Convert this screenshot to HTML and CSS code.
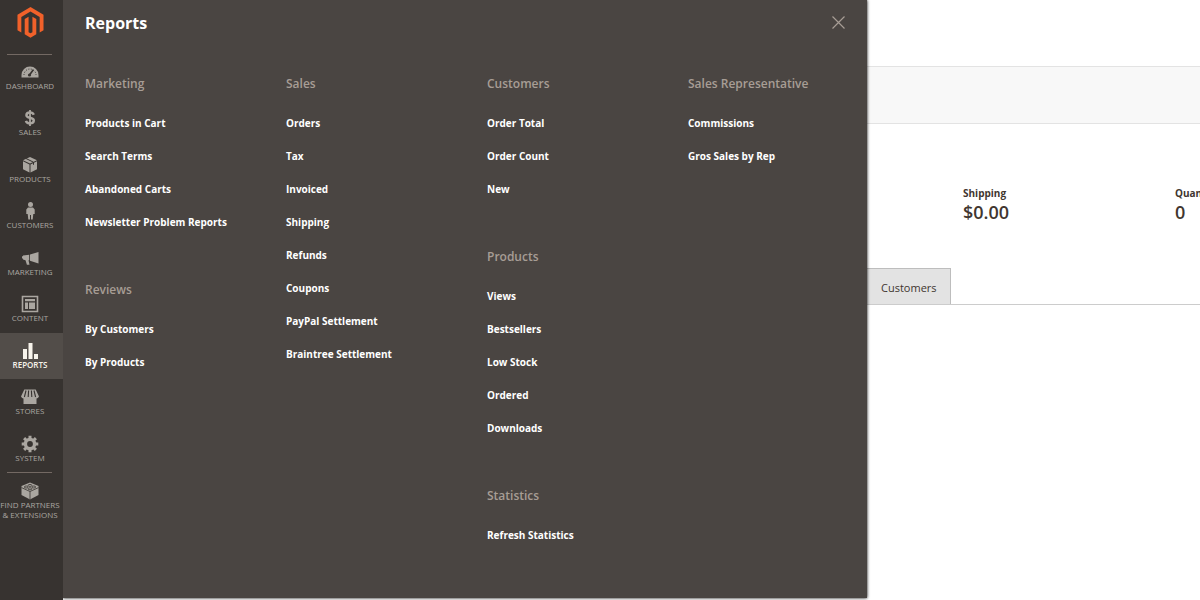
FILE: index.html
```html
<!DOCTYPE html>
<html lang="en">
<head>
<meta charset="utf-8">
<title>Reports</title>
<link rel="stylesheet" href="styles.css">
</head>
<body>
<div class="page">
  <nav class="sidebar" aria-label="Main">
    <a class="logo" href="#" aria-label="Home">
      <svg width="27" height="31" viewBox="0 0 28 32"><path fill="#f1612a" d="M14 0L27.500 8V24L23.500 26.300V10.400L14 4.700L4.500 10.400V26.300L.5 24V8zM8 12.400L12 10V26L14 27.200L16 26V10L20 12.400V28.200L14 31.700L8 28.200z"/></svg>
    </a>
    <ul class="nav-list">
      <li class="nav-item"><a href="#"><svg class="icon" viewBox="0 0 18 18"><path fill="currentColor" d="M.5 14.500V12a8.500 8.500 0 0 1 17 0v2.500z"/><g fill="none" stroke="#373330"><path stroke-width="1" stroke-dasharray="1 1.500" d="M3 12a6 6 0 0 1 12 0"/><path stroke-width="1.600" d="M12.300 6.800L8.500 12"/></g><circle cx="8.500" cy="12" r="1.600" fill="#373330"/></svg><span>Dashboard</span></a></li>
      <li class="nav-item"><a href="#"><svg class="icon" viewBox="0 0 18 18"><g fill="none" stroke="currentColor"><path stroke-width="2.400" d="M12.800 5.700C12.200 4.300 10.700 3.500 9 3.500C7 3.500 5.400 4.500 5.400 6.200C5.400 9.800 12.800 7.700 12.800 11.500C12.800 13.200 11.200 14.300 9 14.300C7 14.300 5.400 13.400 4.900 11.800"/><path stroke-width="1.800" d="M9 1V17"/></g></svg><span>Sales</span></a></li>
      <li class="nav-item"><a href="#"><svg class="icon" viewBox="0 0 18 18"><path fill="currentColor" d="M9 1L16 4.200L9 7.500L2 4.200zM2 5.300L8.500 8.500V16.500L2 13.200zM16 5.300V13.200L9.500 16.500V8.500z"/><path fill="none" stroke="#373330" d="M5 2.500L12.500 6.200V8.800"/></svg><span>Products</span></a></li>
      <li class="nav-item"><a href="#"><svg class="icon" viewBox="0 0 18 18"><circle cx="9.500" cy="2.500" r="2.500" fill="currentColor"/><path fill="currentColor" d="M7 5.500h5l1.700 2v4.500h-1.400l-.6 5.500H10V13H9v4.500H7.300L6.700 12H5.300V7.500z"/></svg><span>Customers</span></a></li>
      <li class="nav-item"><a href="#"><svg class="icon" viewBox="0 0 18 18"><path fill="currentColor" d="M17.500 3V14.500L9 11.700V5.500zM8.200 5.700V11.300H7.500l1 4.400H5.900L4.500 11.200L2 10.600V9.500H1V7.300H2V6.400z"/></svg><span>Marketing</span></a></li>
      <li class="nav-item"><a href="#"><svg class="icon" viewBox="0 0 18 18"><path fill="none" stroke="currentColor" stroke-width="1.600" d="M1.500 1.500H16.500V16.500H1.500z"/><path fill="currentColor" d="M4 4h10v2.300H4zM4 7.500h3V14H4zM8 7.500h6V14H8z"/></svg><span>Content</span></a></li>
      <li class="nav-item nav-item-active"><a href="#" aria-current="page"><svg class="icon" viewBox="0 0 18 18"><path fill="currentColor" d="M2 7h4v10H2zM7.500 1h4v16h-4zM13 12h4v5h-4z"/></svg><span>Reports</span></a></li>
      <li class="nav-item"><a href="#"><svg class="icon" viewBox="0 0 18 18"><path fill="currentColor" d="M3.300 1.500H14.700L18 8.500Q17 10.500 15.500 10.500V16H2.500V10.500Q1 10.500 0 8.500z"/><path fill="none" stroke="#373330" stroke-width="1.100" d="M5 2.500L3.400 9M7.600 2.500L7.200 9M10.400 2.500L10.800 9M13 2.500L14.600 9"/></svg><span>Stores</span></a></li>
      <li class="nav-item"><a href="#"><svg class="icon" viewBox="0 0 18 18"><circle cx="9" cy="9" r="4.600" fill="none" stroke="currentColor" stroke-width="3.400"/><path stroke="currentColor" stroke-width="3" d="M9 .7V4M9 14v3.300M.7 9H4M14 9h3.300M3.100 3.100L5.500 5.500M12.500 12.500L14.900 14.900M3.100 14.900L5.500 12.500M12.500 5.500L14.900 3.100"/></svg><span>System</span></a></li>
      <li class="nav-item nav-item-last"><a href="#"><svg class="icon" viewBox="0 0 18 18"><path fill="currentColor" d="M9 .5L17.500 4V13L9 17.500L.5 13V4z"/><g fill="none" stroke="#373330" stroke-width=".8"><path d="M.5 5.600L9 9.500L17.500 5.600M9 9.500V17.500"/><ellipse cx="9" cy="3.400" rx="1.900" ry="1"/><ellipse cx="5.200" cy="5" rx="1.900" ry="1"/><ellipse cx="12.800" cy="5" rx="1.900" ry="1"/><ellipse cx="9" cy="6.800" rx="1.900" ry="1"/></g></svg><span>Find Partners<br>&amp; Extensions</span></a></li>
    </ul>
  </nav>

  <section class="menu" aria-labelledby="menu-title">
    <header class="menu-header">
      <h1 class="menu-title" id="menu-title">Reports</h1>
      <button class="menu-close" type="button" aria-label="Close"><svg width="13" height="13" viewBox="0 0 13 13"><path fill="none" stroke="currentColor" stroke-width="1.200" d="M.5 .5L12.500 12.500M12.500 .5L.5 12.500"/></svg></button>
    </header>
    <div class="menu-columns">
      <div class="menu-column">
        <section><h2>Marketing</h2>
          <ul><li><a href="#">Products in Cart</a></li><li><a href="#">Search Terms</a></li><li><a href="#">Abandoned Carts</a></li><li><a href="#">Newsletter Problem Reports</a></li></ul></section>
        <section><h2>Reviews</h2>
          <ul><li><a href="#">By Customers</a></li><li><a href="#">By Products</a></li></ul></section>
      </div>
      <div class="menu-column">
        <section><h2>Sales</h2>
          <ul><li><a href="#">Orders</a></li><li><a href="#">Tax</a></li><li><a href="#">Invoiced</a></li><li><a href="#">Shipping</a></li><li><a href="#">Refunds</a></li><li><a href="#">Coupons</a></li><li><a href="#">PayPal Settlement</a></li><li><a href="#">Braintree Settlement</a></li></ul></section>
      </div>
      <div class="menu-column">
        <section><h2>Customers</h2>
          <ul><li><a href="#">Order Total</a></li><li><a href="#">Order Count</a></li><li><a href="#">New</a></li></ul></section>
        <section><h2>Products</h2>
          <ul><li><a href="#">Views</a></li><li><a href="#">Bestsellers</a></li><li><a href="#">Low Stock</a></li><li><a href="#">Ordered</a></li><li><a href="#">Downloads</a></li></ul></section>
        <section><h2>Statistics</h2>
          <ul><li><a href="#">Refresh Statistics</a></li></ul></section>
      </div>
      <div class="menu-column">
        <section><h2>Sales Representative</h2>
          <ul><li><a href="#">Commissions</a></li><li><a href="#">Gros Sales by Rep</a></li></ul></section>
      </div>
    </div>
  </section>

  <main class="content">
    <div class="toolbar"></div>
    <dl class="totals">
      <div class="total"><dt>Shipping</dt><dd>$0.00</dd></div>
      <div class="total"><dt>Quantity</dt><dd>0</dd></div>
    </dl>
    <div class="tabs" role="tablist">
      <button class="tab" type="button" role="tab">Customers</button>
    </div>
  </main>
</div>
</body>
</html>
```
FILE: styles.css
```css
* { box-sizing: border-box; }
body {
  margin: 0;
  background: #fff;
  color: #41362f;
  font-family: "Open Sans", "Noto Sans", sans-serif;
}
h1, h2, ul, dl, dd { margin: 0; padding: 0; }
ul { list-style: none; }
a { color: inherit; text-decoration: none; }
button { border: 0; font: inherit; cursor: pointer; }
svg { display: block; }

.page {
  display: flex;
  align-items: flex-start;
  min-height: 100vh;
  overflow: hidden;
}

/* Sidebar */
.sidebar {
  flex: 0 0 63px;
  align-self: stretch;
  z-index: 2;
  background: #373330;
  color: #aaa6a0;
}
.logo {
  display: flex;
  justify-content: center;
  width: 61px;
  height: 54px;
  padding-top: 7px;
}
.nav-list::before,
.nav-item-last::before {
  content: "";
  display: block;
  height: 1px;
  margin: 0 11px 0 7px;
  background: #736963;
}
.nav-list::before { margin-bottom: -1px; }
.nav-item { min-height: 46px; }
.nav-item:nth-child(even) { min-height: 47px; }
.nav-item a {
  display: flex;
  flex-direction: column;
  align-items: center;
  padding: 9px 3px 0 0;
  font-size: 8px;
  font-weight: 500;
  line-height: 10px;
  text-align: center;
  text-transform: uppercase;
  white-space: nowrap;
}
.icon { width: 18px; height: 18px; }
.nav-item-active {
  background: #524d49;
  color: #f7f3eb;
}
.nav-item-active a { font-weight: 600; }

/* Reports flyout */
.menu {
  flex: 0 0 67%;
  min-height: calc(100vh - 2px);
  background: #4a4542;
  color: #fff;
  box-shadow: 0 0 3px #000;
  z-index: 1;
}
.menu-header {
  display: flex;
  justify-content: space-between;
  align-items: center;
  height: 45px;
  padding: 0 22px;
}
.menu-title {
  font-size: 16px;
  font-weight: 700;
  line-height: 24px;
}
.menu-close {
  padding: 0;
  background: none;
  color: #a79d95;
}
.menu-columns {
  display: grid;
  grid-template-columns: repeat(4, 1fr);
  padding-top: 30px;
}
.menu-column {
  display: flex;
  flex-direction: column;
  gap: 42px;
  padding-left: 22px;
}
.menu-column h2 {
  margin-bottom: 14px;
  color: #a79d95;
  font-size: 12px;
  font-weight: 600;
  line-height: 18px;
}
.menu-column li {
  font-size: 10px;
  font-weight: 700;
  line-height: 33px;
}

/* Page content */
.content {
  flex: 1 1 0;
  min-width: 0;
  padding-top: 66px;
}
.toolbar {
  height: 58px;
  border: solid #e3e3e3;
  border-width: 1px 0;
  background: #f8f8f8;
}
.totals {
  display: grid;
  grid-template-columns: repeat(2, 212px);
  padding: 61px 0 45px 96px;
}
.total dt {
  font-size: 10px;
  font-weight: 700;
  line-height: 16px;
}
.total dd {
  font-size: 18px;
  font-weight: 600;
  line-height: 22px;
}
.tabs {
  display: flex;
  border-bottom: 1px solid #ccc;
}
.tab {
  padding: 11px 13px 8px 14px;
  border: solid #bdbdbd;
  border-width: 1px 1px 0 0;
  background: #e3e3e3;
  color: #41362f;
  font-size: 11px;
  line-height: 16px;
}
```
